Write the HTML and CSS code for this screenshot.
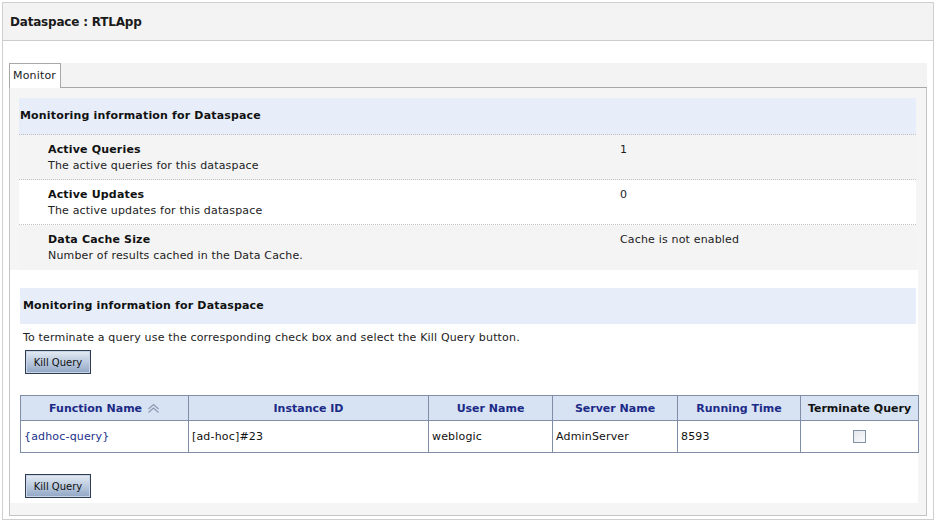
FILE: index.html
```html
<!DOCTYPE html>
<html>
<head>
<meta charset="utf-8">
<link rel="stylesheet" href="styles.css">
</head>
<body>
<div class="frame">
  <div class="title-bar"><h1 class="title">Dataspace : RTLApp</h1></div>
  <div class="body-area">
    <div class="tabs">
      <div class="tab">Monitor</div>
      <div class="tab-fill"></div>
    </div>
    <div class="panel">
      <div class="section-one">
        <div class="sec-head">Monitoring information for Dataspace</div>
        <div class="prop-row shaded">
          <div class="prop-label"><div class="prop-name">Active Queries</div><div class="prop-desc">The active queries for this dataspace</div></div>
          <div class="prop-value">1</div>
        </div>
        <div class="prop-row">
          <div class="prop-label"><div class="prop-name">Active Updates</div><div class="prop-desc">The active updates for this dataspace</div></div>
          <div class="prop-value">0</div>
        </div>
        <div class="prop-row shaded last">
          <div class="prop-label"><div class="prop-name">Data Cache Size</div><div class="prop-desc">Number of results cached in the Data Cache.</div></div>
          <div class="prop-value">Cache is not enabled</div>
        </div>
      </div>
      <div class="section-two">
        <div class="sec-head sec-head-two">Monitoring information for Dataspace</div>
        <p class="hint">To terminate a query use the corresponding check box and select the Kill Query button.</p>
        <button class="btn">Kill Query</button>
        <table class="grid">
          <colgroup>
            <col class="c1"><col class="c2"><col class="c3"><col class="c4"><col class="c5"><col class="c6">
          </colgroup>
          <thead>
            <tr>
              <th>Function Name <svg class="sort" width="13" height="10" viewBox="0 0 13 10"><polyline points="1.5,6 6.5,1.5 11.5,6" fill="none" stroke="#8c9bb3" stroke-width="1.2"/><polyline points="1.5,9.5 6.5,5 11.5,9.5" fill="none" stroke="#8c9bb3" stroke-width="1.2"/></svg></th>
              <th>Instance ID</th>
              <th>User Name</th>
              <th>Server Name</th>
              <th>Running Time</th>
              <th class="plain">Terminate Query</th>
            </tr>
          </thead>
          <tbody>
            <tr>
              <td><span class="link">{adhoc-query}</span></td>
              <td>[ad-hoc]#23</td>
              <td>weblogic</td>
              <td>AdminServer</td>
              <td>8593</td>
              <td class="center"><span class="check"></span></td>
            </tr>
          </tbody>
        </table>
        <button class="btn btn-bottom">Kill Query</button>
      </div>
    </div>
  </div>
</div>
</body>
</html>
```

FILE: styles.css
```css
html, body {
  margin: 0;
  padding: 0;
  background: #ffffff;
}
body {
  font-family: "DejaVu Sans", Verdana, sans-serif;
  font-size: 11px;
  letter-spacing: 0.17px;
  color: #000;
}
.frame {
  margin: 2px 0 0 2px;
  width: 932px;
  height: 518px;
  border: 1px solid #cfcfcf;
  box-sizing: border-box;
}
.title-bar {
  height: 37px;
  background: #f3f3f3;
  border-bottom: 1px solid #cccccc;
  display: flex;
  align-items: center;
  padding-left: 7px;
}
.title {
  margin: 0;
  font-size: 12px;
  letter-spacing: -0.2px;
  font-weight: bold;
  color: #1a1a1a;
}
.body-area {
  padding: 22px 6px 0 6px;
}
.tabs {
  display: flex;
  height: 25px;
}
.tab {
  width: 52px;
  border: 1px solid #a8a8a8;
  border-bottom: none;
  background: #fff;
  padding: 5px 0 0 3px;
  box-sizing: border-box;
  height: 25px;
  font-size: 11px;
  color: #222;
}
.tab-fill {
  flex: 1;
  background: #f3f3f3;
  border-bottom: 1px solid #a8a8a8;
}
.panel {
  border: 1px solid #c4c4c4;
  border-top: none;
  height: 428px;
  background: #f5f5f5;
  box-sizing: border-box;
  padding-top: 10px;
}
.section-one {
  margin: 0 10px 0 9px;
}
.sec-head {
  background: #e7eef9;
  height: 35px;
  border-bottom: 1px dotted #c2c2c2;
  display: flex;
  align-items: center;
  padding-left: 1px;
  padding-bottom: 1px;
  font-weight: bold;
  color: #111;
}
.prop-row {
  display: flex;
  height: 45px;
  border-bottom: 1px dotted #c2c2c2;
  background: #fff;
  box-sizing: border-box;
}
.prop-row.shaded {
  background: #f4f4f4;
}
.prop-row.last {
  border-bottom: none;
  height: 45px;
}
.prop-label {
  width: 572px;
  padding: 7px 0 0 29px;
  line-height: 16px;
}
.prop-name {
  font-weight: bold;
  color: #111;
}
.prop-desc {
  color: #222;
}
.prop-value {
  padding-top: 7px;
  line-height: 16px;
  color: #222;
}
.section-two {
  background: #ffffff;
  margin: 0 8px 0 0;
  height: 233px;
  padding: 18px 0 0 10px;
  box-sizing: border-box;
}
.sec-head-two {
  width: 893px;
  margin-left: 0;
  padding-left: 3px;
  border-bottom: none;
}
.hint {
  margin: 6px 0 0 3px;
  line-height: 15px;
  color: #222;
}
.btn {
  display: block;
  margin: 5px 0 0 5px;
  width: 66px;
  height: 24px;
  padding: 0;
  border: 1px solid #2f3d52;
  box-shadow: inset 0 0 0 1px #c9d5e6;
  background: linear-gradient(#e4ebf4, #b6c6dc 55%, #91a6c4);
  font-family: "DejaVu Sans", Verdana, sans-serif;
  font-size: 10px;
  color: #111;
}
.btn-bottom {
  margin-top: 21px;
}
.grid {
  margin: 21px 0 0 0;
  width: 898px;
  border-collapse: collapse;
  table-layout: fixed;
}
.c1 { width: 168px; }
.c2 { width: 240px; }
.c3 { width: 124px; }
.c4 { width: 125px; }
.c5 { width: 123px; }
.c6 { width: 118px; }
.grid th, .grid td {
  border: 1px solid #7f8ea6;
}
.grid th {
  background: #d7e3f3;
  height: 24px;
  padding: 0;
  font-weight: bold;
  letter-spacing: 0;
  color: #1c2a87;
  text-align: center;
  white-space: nowrap;
}
.grid th.plain {
  color: #111;
}
.sort {
  vertical-align: -1px;
  margin-left: 1px;
}
.grid td {
  height: 31px;
  padding: 0 0 0 3px;
  color: #111;
}
.grid td.center {
  text-align: center;
  padding: 0;
}
.link {
  color: #22328a;
}
.check {
  display: inline-block;
  width: 11px;
  height: 11px;
  border: 1px solid #8391a6;
  background: linear-gradient(135deg, #e2e6ec, #fbfbfb);
  vertical-align: middle;
}
```
